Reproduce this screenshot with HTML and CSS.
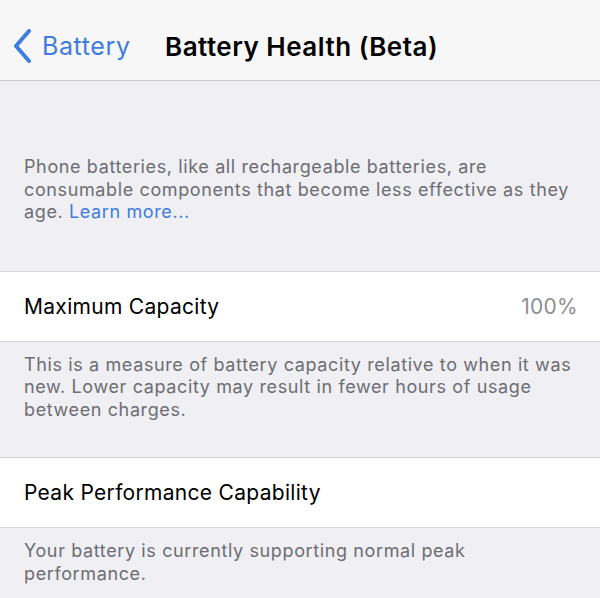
FILE: index.html
```html
<!DOCTYPE html>
<html>
<head>
<meta charset="utf-8">
<link rel="stylesheet" href="styles.css">
</head>
<body>
<div class="nav">
  <div class="back">
    <svg class="chev" width="20" height="34" viewBox="0 0 20 34"><path d="M17 2 L4 17 L17 32" fill="none" stroke="#3e7ce0" stroke-width="4" stroke-linecap="round" stroke-linejoin="round"/></svg>
    <span class="back-label">Battery</span>
  </div>
  <div class="title">Battery Health (Beta)</div>
</div>
<p class="intro">Phone batteries, like all rechargeable batteries, are consumable components that become less effective as they age. <span class="link">Learn more...</span></p>
<div class="row"><span class="label">Maximum Capacity</span><span class="value">100%</span></div>
<p class="note note-mid">This is a measure of battery capacity relative to when it was new. Lower capacity may result in fewer hours of usage between charges.</p>
<div class="row"><span class="label">Peak Performance Capability</span></div>
<p class="note">Your battery is currently supporting normal peak performance.</p>
</body>
</html>
```
FILE: styles.css
```css
html, body {
  margin: 0;
  padding: 0;
  background: #efeff4;
  font-family: Inter, "Liberation Sans", sans-serif;
  overflow: hidden;
}
.nav {
  height: 81px;
  background: #f7f7f8;
  border-bottom: 1px solid #c9c9ce;
  display: flex;
  align-items: center;
  padding-top: 12px;
  box-sizing: border-box;
}
.back {
  display: flex;
  align-items: center;
  padding-left: 12px;
  width: 153px;
  color: #3e7ce0;
}
.chev {
  display: block;
  margin-right: 10px;
}
.back-label {
  font-size: 25px;
  letter-spacing: 0.6px;
}
.title {
  font-size: 26px;
  font-weight: 600;
  color: #000;
  letter-spacing: 0.5px;
}
.intro {
  margin: 0;
  padding: 75px 20px 47px 24px;
  font-size: 18px;
  line-height: 22.5px;
  color: #6d6d72;
  letter-spacing: 0.62px;
}
.link {
  color: #3e7ce0;
}
.row {
  height: 69px;
  background: #fff;
  border-top: 1px solid #d8d8dc;
  border-bottom: 1px solid #d8d8dc;
  display: flex;
  align-items: center;
  justify-content: space-between;
  padding: 0 22px 0 24px;
}
.label {
  font-size: 21px;
  color: #000;
  letter-spacing: 0.3px;
}
.value {
  font-size: 21px;
  color: #8e8e93;
  letter-spacing: 0.3px;
}
.note {
  margin: 0;
  padding: 12px 20px 0 24px;
  font-size: 18px;
  line-height: 22.5px;
  color: #6d6d72;
  letter-spacing: 0.62px;
}
.note-mid {
  padding-bottom: 36px;
}
```
